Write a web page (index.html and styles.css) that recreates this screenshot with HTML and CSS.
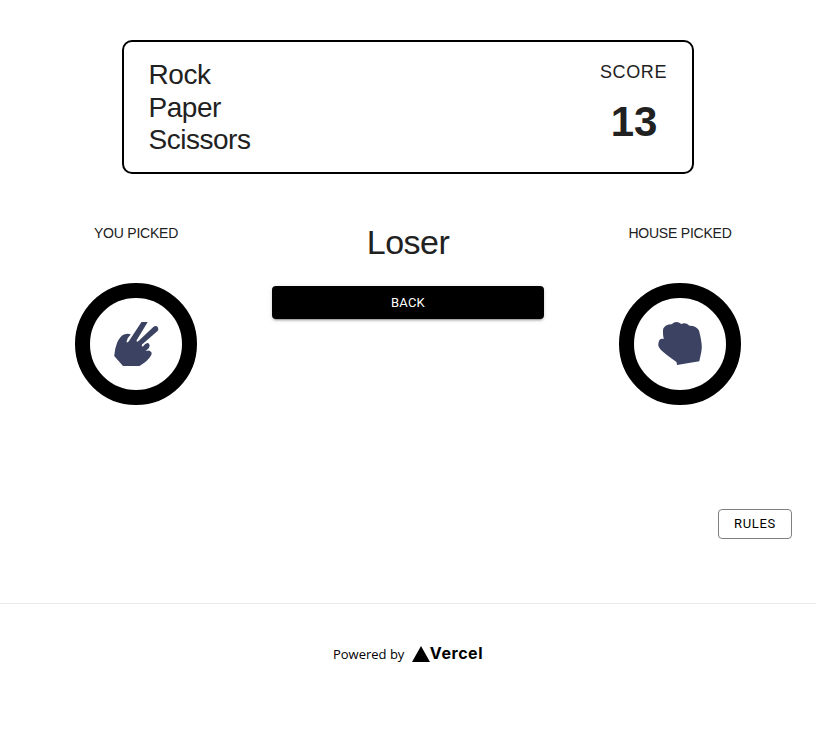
FILE: index.html
```html
<!DOCTYPE html>
<html lang="en">
<head>
<meta charset="utf-8">
<title>Rock Paper Scissors</title>
<link rel="stylesheet" href="styles.css">
</head>
<body>
<header class="scoreboard">
  <h1 class="title">Rock<br>Paper<br>Scissors</h1>
  <div class="score"><span class="score-label">SCORE</span><span class="score-value">13</span></div>
</header>
<main class="game">
  <section class="pick">
    <h2 class="pick-label">YOU PICKED</h2>
    <div class="token"><svg class="hand" viewBox="0 0 92 92"><path d="M24.2 58Q25 50 27 45Q30 38 34 36.5Q38 35 40.8 36.5Q37 40 36.5 43.5Q37 45.5 39 43L51.5 24H57.7L46.5 42.5Q46.5 44.5 48.5 43L63.3 29Q66 27 68 29.5Q69 31.5 67 33.5L52 46.5Q51 49 53 48.5Q55.5 44.5 58 45Q61 47 58.5 50.5L55.5 53L59 52.5Q63 54 61 57.5Q58 63 49.5 68H33Z"/></svg></div>
  </section>
  <section class="result">
    <h2 class="verdict">Loser</h2>
    <button class="back">BACK</button>
  </section>
  <section class="pick">
    <h2 class="pick-label">HOUSE PICKED</h2>
    <div class="token"><svg class="hand" viewBox="0 0 92 92"><path d="M29.7 41Q28 31 30 29.5Q33 26 37.7 26.3Q42 22 47.3 26Q51.5 24 55.5 27.8Q62 27.5 65 32.5Q69 48 67.3 54L65.3 63.3L43 67L42.5 64Q31 56 26.5 51.5Q22.5 47 25.5 42Q27 40 29.7 41Z"/></svg></div>
  </section>
</main>
<div class="actions"><button class="rules">RULES</button></div>
<footer class="footer">
  <span class="powered">Powered by</span>
  <span class="vercel"><svg class="triangle" viewBox="0 0 18 16"><path d="M9 0L18 16H0Z"/></svg><span class="wordmark">Vercel</span></span>
</footer>
</body>
</html>
```
FILE: styles.css
```css
* { box-sizing: border-box; }
body { margin: 0; background: #fff; color: #212121; font-family: "Liberation Sans", Arial, sans-serif; }
h1, h2 { margin: 0; font-weight: 400; }
.scoreboard { width: 572px; height: 134px; margin: 40px auto 0; border: 2px solid #000; border-radius: 10px; padding: 16px 25px; display: flex; justify-content: space-between; }
.title { font-size: 28px; line-height: 32.67px; letter-spacing: -0.5px; margin: 1px 0 0 -0.4px; }
.score { display: flex; flex-direction: column; align-items: center; }
.score-label { font-size: 18px; line-height: 28px; letter-spacing: 0.6px; }
.score-value { font-size: 42px; line-height: 48px; font-weight: 700; margin: 12px 0 0 1px; }
.game { display: grid; grid-template-columns: repeat(3, 1fr); margin-top: 48px; }
.pick { display: flex; flex-direction: column; align-items: center; }
.pick-label { font-size: 14px; line-height: 22px; letter-spacing: -0.22px; }
.token { width: 122px; height: 122px; margin-top: 39px; border: 15px solid #000; border-radius: 50%; }
.hand { display: block; width: 92px; height: 92px; fill: #3b4262; }
.verdict { font-size: 34px; line-height: 40px; letter-spacing: -0.5px; text-align: center; }
.back { display: block; width: 100%; height: 33px; margin-top: 24px; padding: 0; border: 0; border-radius: 4px; background: #000; color: #fff; font: 400 13px/22px Roboto, sans-serif; letter-spacing: 0.2px; box-shadow: 0 3px 1px -2px rgba(0,0,0,.2), 0 2px 2px rgba(0,0,0,.14), 0 1px 5px rgba(0,0,0,.12); }
.actions { display: flex; justify-content: flex-end; margin: 104px 24px 0 0; }
.rules { width: 74px; height: 30px; padding: 0; border: 1px solid #808080; border-radius: 4px; background: #fff; color: #000; font: 400 13px/22px Roboto, sans-serif; letter-spacing: 0.7px; }
.footer { height: 100px; margin-top: 64px; border-top: 1px solid #eaeaea; display: flex; justify-content: center; align-items: center; gap: 8px; color: #000; }
.powered { font: 13px/20px "Open Sans", sans-serif; }
.vercel { display: flex; align-items: center; }
.triangle { width: 18px; height: 16px; }
.wordmark { margin: 0 0 2px -0.5px; font: 700 16px/16px Inter, sans-serif; letter-spacing: 0.55px; }
```
